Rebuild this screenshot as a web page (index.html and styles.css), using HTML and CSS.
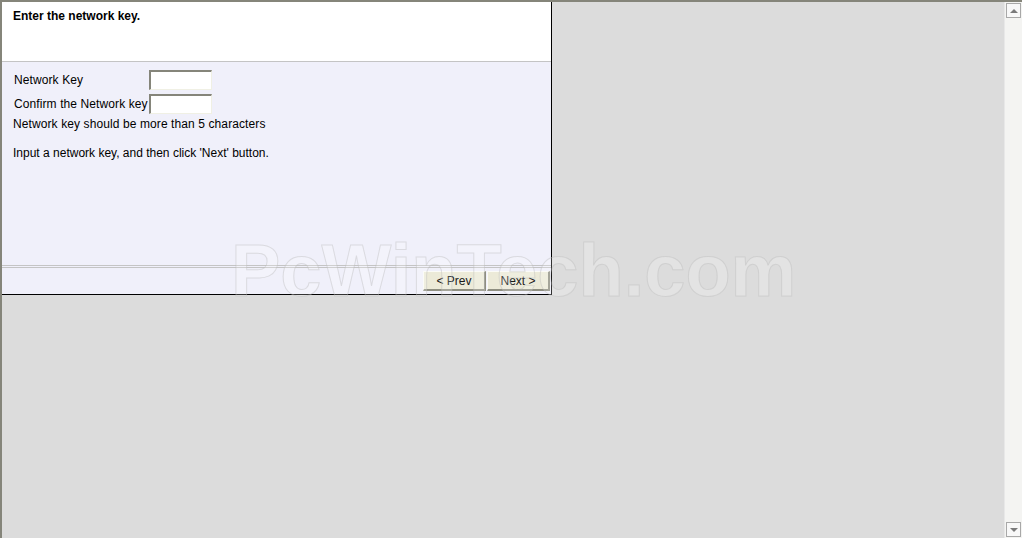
FILE: index.html
```html
<!DOCTYPE html>
<html>
<head>
<title>Network Key</title>
<link rel="stylesheet" href="styles.css">
</head>
<body>

<div class="page">
  <div class="content">
    <!-- wizard step: network key -->
    <div class="wizard">
      <div class="wizardHeader">Enter the network key.</div>
      <div class="wizardBody">
        <div class="fieldRow">
          <label class="fieldLabel">Network Key</label>
          <input class="keyInput" type="password">
        </div>
        <div class="fieldRow">
          <label class="fieldLabel">Confirm the Network key</label>
          <input class="keyInput" type="password">
        </div>
        <p class="hint">Network key should be more than 5 characters</p>
        <p class="hint instruction">Input a network key, and then click 'Next' button.</p>
      </div>
      <div class="wizardFooter">
        <div class="separator"></div>
        <div class="buttonContainer">
          <button class="navButton">&lt; Prev</button>
          <button class="navButton">Next &gt;</button>
        </div>
      </div>
    </div>
    <div class="watermark">PcWinTech.com</div>
  </div>

  <div class="scrollbar">
    <div class="scrollButton"><span class="arrowUp"></span></div>
    <div class="scrollTrack"></div>
    <div class="scrollButton"><span class="arrowDown"></span></div>
  </div>
</div>

</body>
</html>
```

FILE: styles.css
```css
:root {
  --page-bg: #dcdcdc;
  --frame-edge: #85857a;
  --panel-bg: #f0f0fa;
  --line-color: #c4c4c4;
  --button-bg: #ecead8;
  --text-color: #000000;
}

html, body {
  margin: 0;
  height: 100%;
}

body {
  background-color: var(--page-bg);
  color: var(--text-color);
  font-family: "Liberation Sans", Arial, sans-serif;
  font-size: 12px;
}

.page {
  display: flex;
  height: 538px;
  box-sizing: border-box;
  border-top: 2px solid var(--frame-edge);
  border-left: 2px solid var(--frame-edge);
}

.content {
  position: relative;
  flex-grow: 1;
}

.wizard {
  width: 550px;
  height: 293px;
  box-sizing: border-box;
  border-right: 1px solid #000;
  border-bottom: 1px solid #000;
  background-color: var(--panel-bg);
  display: flex;
  flex-direction: column;
}

.wizardHeader {
  height: 60px;
  background-color: #ffffff;
  border-bottom: 1px solid var(--line-color);
  padding: 7px 0 0 11px;
  box-sizing: border-box;
  font-weight: bold;
}

.wizardBody {
  flex-grow: 1;
  padding: 8px 0 0 11px;
}

.fieldRow {
  display: flex;
  align-items: center;
  margin-bottom: 4px;
}

.fieldLabel {
  width: 135px;
  padding-left: 1px;
  letter-spacing: 0.1px;
}

.keyInput {
  width: 63px;
  height: 20px;
  box-sizing: border-box;
  margin: 0;
  background-color: #ffffff;
  border-style: solid;
  border-width: 2px 1px 1px 2px;
  border-color: #85857a #f0f0e4 #f0f0e4 #85857a;
}

.hint {
  margin: -1px 0 0 0;
  line-height: 14px;
  letter-spacing: 0.1px;
}

.instruction {
  margin-top: 15px;
  letter-spacing: 0;
}

.wizardFooter {
  padding-bottom: 3px;
}

.separator {
  height: 1px;
  border-top: 1px solid var(--line-color);
  border-bottom: 1px solid var(--line-color);
  margin-bottom: 3px;
}

.buttonContainer {
  display: flex;
  justify-content: flex-end;
  gap: 1px;
  padding-right: 1px;
}

.navButton {
  width: 63px;
  height: 20px;
  padding: 0;
  font-family: "Liberation Sans", Arial, sans-serif;
  font-size: 12px;
  color: #1a1a1a;
  background-color: var(--button-bg);
  border-style: solid;
  border-width: 1px 2px 2px 1px;
  border-color: #fbfbf6 #8e8e80 #8e8e80 #fbfbf6;
}

/* faint site watermark over the page */
.watermark {
  position: absolute;
  left: 229px;
  top: 232px;
  font-family: "Liberation Sans", Arial, sans-serif;
  font-weight: bold;
  font-size: 74px;
  line-height: 74px;
  color: rgba(255, 255, 255, 0.2);
  -webkit-text-stroke: 1px rgba(185, 185, 185, 0.4);
  white-space: nowrap;
  pointer-events: none;
}

.scrollbar {
  width: 17px;
  background-color: #f4f4f2;
  display: flex;
  flex-direction: column;
  border-left: 1px solid #e8e8e8;
}

.scrollTrack {
  flex-grow: 1;
}

.scrollButton {
  height: 15px;
  margin: 1px;
  box-sizing: border-box;
  border: 1px solid #a8a8a8;
  background-color: #f8f8f8;
  display: flex;
  align-items: center;
  justify-content: center;
}

.arrowUp {
  width: 0;
  height: 0;
  border-left: 4px solid transparent;
  border-right: 4px solid transparent;
  border-bottom: 4px solid #7a7a7a;
}

.arrowDown {
  width: 0;
  height: 0;
  border-left: 4px solid transparent;
  border-right: 4px solid transparent;
  border-top: 4px solid #7a7a7a;
}
```
